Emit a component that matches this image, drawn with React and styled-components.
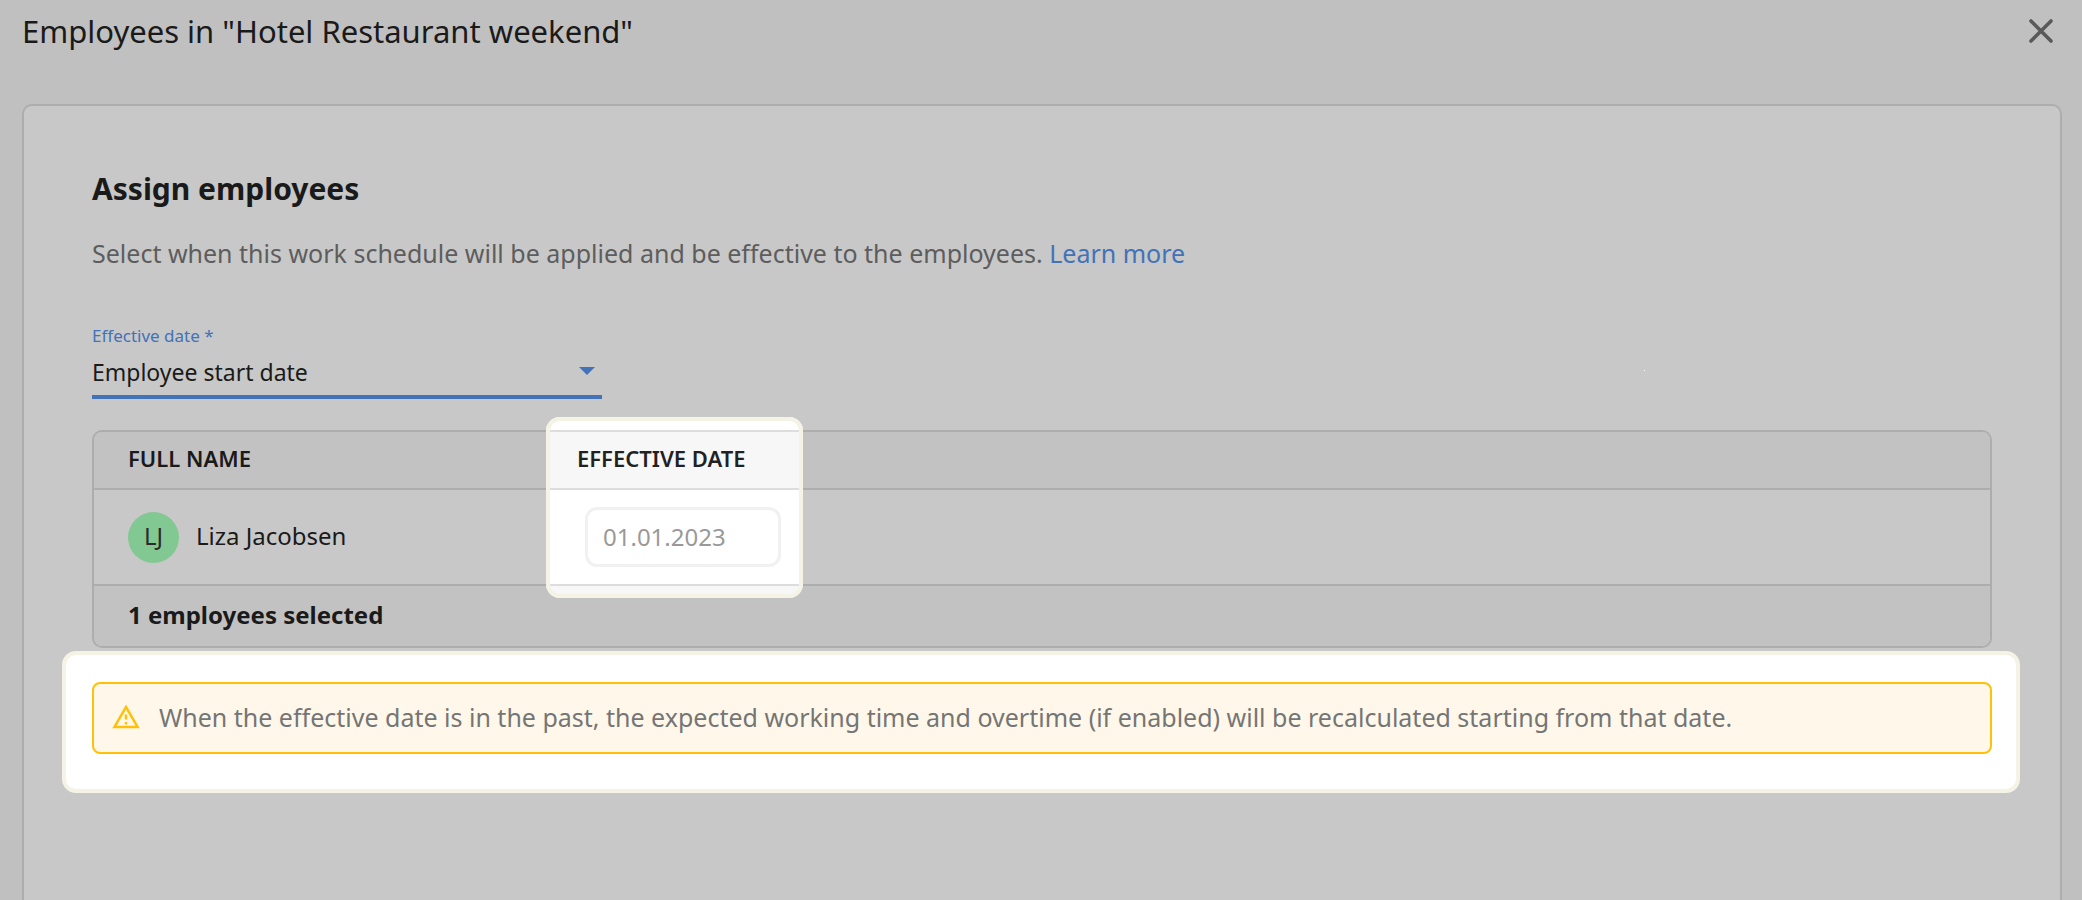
import React, { useState } from "react";
import styled, { createGlobalStyle } from "styled-components";

const GlobalStyle = createGlobalStyle`
  :root {
    --page: #c0c0c0;
    --surface: #c8c8c8;
    --stripe: #c2c2c2;
    --line: #adadad;
    --ink: #1a1a1a;
    --muted: #5d5d5d;
    --blue: #4272b8;
    --amber: #ffc107;
    --glow: #f5f3e5;
  }
  * {
    box-sizing: border-box;
  }
  body {
    margin: 0;
    background: var(--page);
    color: var(--ink);
    font-family: "Noto Sans", sans-serif;
    font-size: 24px;
    line-height: 32px;
  }
`;

const Page = styled.div`
  display: flex;
  flex-direction: column;
  min-height: 100vh;
  padding: 11px 20px 0 22px;
`;

const Header = styled.header`
  display: flex;
  align-items: center;
  justify-content: space-between;
  margin-bottom: 53px;

  h1 {
    margin: 0;
    font-size: 31px;
    font-weight: 400;
    line-height: 40px;
  }
`;

const CloseButton = styled.button`
  display: flex;
  align-items: center;
  justify-content: center;
  width: 42px;
  height: 40px;
  padding: 0;
  border: 0;
  background: none;
  color: #595959;
  cursor: pointer;
`;

const Card = styled.main`
  position: relative;
  flex: 1;
  padding: 63px 68px 0;
  border: 2px solid var(--line);
  border-bottom: 0;
  border-radius: 10px 10px 0 0;
  background: var(--surface);

  h2 {
    margin: 0 0 28px;
    font-size: 30px;
    font-weight: 700;
    line-height: 40px;
  }
`;

const Intro = styled.p`
  margin: 0 0 55px;
  color: var(--muted);
  font-size: 25px;

  a {
    color: var(--blue);
    text-decoration: none;
  }
`;

const Field = styled.div`
  position: relative;
  width: 510px;
  max-width: 100%;
  margin-bottom: 31px;

  label {
    display: block;
    color: var(--blue);
    font-size: 17px;
    line-height: 24px;
  }

  svg {
    position: absolute;
    right: 7px;
    bottom: 24px;
    pointer-events: none;
  }
`;

const Select = styled.select`
  display: block;
  width: 100%;
  height: 51px;
  padding: 0;
  border: 0;
  border-bottom: 4px solid var(--blue);
  border-radius: 0;
  appearance: none;
  background: none;
  color: var(--ink);
  font: inherit;
  font-size: 23px;
  outline: none;
`;

const Table = styled.table`
  width: 100%;
  table-layout: fixed;
  border: 2px solid var(--line);
  border-radius: 10px;
  border-spacing: 0;
  text-align: left;

  th,
  td {
    padding: 0 34px;
  }
  thead th {
    position: relative;
    height: 58px;
    padding-bottom: 4px;
    border-bottom: 2px solid var(--line);
    background: var(--stripe);
    font-size: 22px;
    font-weight: 600;
    line-height: 28px;
    text-transform: uppercase;
  }
  thead th:first-child {
    width: 449px;
    border-top-left-radius: 8px;
  }
  thead th:last-child {
    border-top-right-radius: 8px;
  }
  tbody td {
    height: 94px;
  }
  tbody td + td {
    padding-left: 42px;
  }
  tfoot td {
    height: 62px;
    padding-bottom: 2px;
    border-top: 2px solid var(--line);
    border-radius: 0 0 8px 8px;
    background: var(--stripe);
    font-weight: 700;
  }
`;

/* Lifts whatever lies beneath it back to full brightness. */
const Spotlight = styled.span`
  position: absolute;
  z-index: 1;
  top: -15px;
  left: 3px;
  width: 257px;
  height: 181px;
  border: 4px solid var(--glow);
  border-radius: 14px;
  backdrop-filter: brightness(1.275);
  pointer-events: none;
`;

const Person = styled.div`
  display: flex;
  align-items: center;
  gap: 17px;
`;

const Avatar = styled.span`
  display: flex;
  align-items: center;
  justify-content: center;
  width: 51px;
  height: 51px;
  padding-bottom: 2px;
  border-radius: 50%;
  background: #82c892;
  color: #2b2b2b;
`;

const Name = styled.span`
  padding-bottom: 2px;
`;

const DateInput = styled.input`
  display: block;
  width: 196px;
  height: 60px;
  padding: 0 15px 2px;
  border: 3px solid #bdbdbd;
  border-radius: 12px;
  background: var(--surface);
  color: #787878;
  font: inherit;
  outline: none;
`;

const AlertFrame = styled.section`
  margin: 3px -28px 0 -30px;
  padding: 27px 24px 35px 26px;
  border: 4px solid var(--glow);
  border-radius: 14px;
  background: #fff;
`;

const Alert = styled.div`
  display: flex;
  align-items: center;
  gap: 18px;
  min-height: 72px;
  padding: 0 17px 2px;
  border: 2px solid var(--amber);
  border-radius: 8px;
  background: #fff8ea;
  color: #757575;
  font-size: 25px;

  svg {
    flex: none;
    color: var(--amber);
  }
`;

const Speck = styled.span`
  position: absolute;
  top: 264px;
  right: 415px;
  width: 1px;
  height: 1px;
  background: #fff;
`;

const CloseIcon = () => (
  <svg width="24" height="24" viewBox="0 0 24 24" aria-hidden="true">
    <path
      d="M2 2l20 20M22 2L2 22"
      fill="none"
      stroke="currentColor"
      strokeWidth="3.6"
      strokeLinecap="round"
    />
  </svg>
);

const ArrowIcon = () => (
  <svg width="16" height="8" viewBox="0 0 16 8" aria-hidden="true">
    <path d="M0 0h16L8 8z" fill="var(--blue)" />
  </svg>
);

const WarningIcon = () => (
  <svg width="30" height="30" viewBox="0 0 24 24" aria-hidden="true">
    <path
      d="M12 5.99L19.53 19H4.47L12 5.99M12 2L1 21h22L12 2zm1 14h-2v2h2v-2zm0-6h-2v4h2v-4z"
      fill="currentColor"
    />
  </svg>
);

const employees = [
  { name: "Liza Jacobsen", initials: "LJ", date: "01.01.2023" },
];

const App = () => {
  const [effective, setEffective] = useState("start");

  return (
    <>
      <GlobalStyle />
      <Page>
        <Header>
          <h1>Employees in "Hotel Restaurant weekend"</h1>
          <CloseButton type="button" aria-label="Close">
            <CloseIcon />
          </CloseButton>
        </Header>
        <Card>
          <h2>Assign employees</h2>
          <Intro>
            Select when this work schedule will be applied and be effective to
            the employees. <a href="#learn-more">Learn more</a>
          </Intro>
          <Field>
            <label htmlFor="effective">Effective date *</label>
            <Select
              id="effective"
              value={effective}
              onChange={(e) => setEffective(e.target.value)}
            >
              <option value="start">Employee start date</option>
            </Select>
            <ArrowIcon />
          </Field>
          <Table>
            <thead>
              <tr>
                <th scope="col">Full name</th>
                <th scope="col">
                  Effective date
                  <Spotlight />
                </th>
              </tr>
            </thead>
            <tbody>
              {employees.map(({ name, initials, date }) => (
                <tr key={name}>
                  <td>
                    <Person>
                      <Avatar>{initials}</Avatar>
                      <Name>{name}</Name>
                    </Person>
                  </td>
                  <td>
                    <DateInput
                      type="text"
                      aria-label={`Effective date for ${name}`}
                      defaultValue={date}
                    />
                  </td>
                </tr>
              ))}
            </tbody>
            <tfoot>
              <tr>
                <td colSpan="2">{employees.length} employees selected</td>
              </tr>
            </tfoot>
          </Table>
          <AlertFrame>
            <Alert role="alert">
              <WarningIcon />
              <span>
                When the effective date is in the past, the expected working
                time and overtime (if enabled) will be recalculated starting
                from that date.
              </span>
            </Alert>
          </AlertFrame>
          <Speck />
        </Card>
      </Page>
    </>
  );
};

export default App;
